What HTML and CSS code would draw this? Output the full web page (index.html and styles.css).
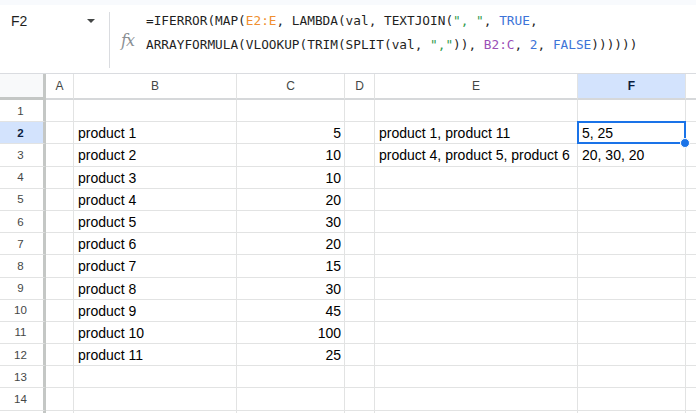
FILE: index.html
```html
<!DOCTYPE html>
<html>
<head>
<meta charset="utf-8">
<link rel="stylesheet" href="styles.css">
</head>
<body>
<div class="topstrip"></div>
<div class="formula-bar">
  <div class="namebox"><span class="name">F2</span><span class="caret"></span></div>
  <div class="sep"></div>
  <div class="fx">fx</div>
  <div class="formula">=IFERROR(MAP(<span class="c-or">E2:E</span>, LAMBDA(val, TEXTJOIN(<span class="c-gr">", "</span>, <span class="c-bl">TRUE</span>,<br>ARRAYFORMULA(VLOOKUP(TRIM(SPLIT(val, <span class="c-gr">","</span>)), <span class="c-pu">B2:C</span>, <span class="c-bl">2</span>, <span class="c-bl">FALSE</span>))))))</div>
</div>
<div class="grid">
  <div class="corner"></div><div class="ch">A</div><div class="ch">B</div><div class="ch">C</div><div class="ch">D</div><div class="ch">E</div><div class="ch sel">F</div><div class="ch last"></div>

  <div class="rh">1</div><div class="c"></div><div class="c"></div><div class="c"></div><div class="c"></div><div class="c"></div><div class="c"></div><div class="c last"></div>
  <div class="rh sel">2</div><div class="c"></div><div class="c">product 1</div><div class="c num">5</div><div class="c"></div><div class="c">product 1, product 11</div><div class="c active">5, 25<span class="handle"></span></div><div class="c last"></div>
  <div class="rh">3</div><div class="c"></div><div class="c">product 2</div><div class="c num">10</div><div class="c"></div><div class="c">product 4, product 5, product 6</div><div class="c">20, 30, 20</div><div class="c last"></div>
  <div class="rh">4</div><div class="c"></div><div class="c">product 3</div><div class="c num">10</div><div class="c"></div><div class="c"></div><div class="c"></div><div class="c last"></div>
  <div class="rh">5</div><div class="c"></div><div class="c">product 4</div><div class="c num">20</div><div class="c"></div><div class="c"></div><div class="c"></div><div class="c last"></div>
  <div class="rh">6</div><div class="c"></div><div class="c">product 5</div><div class="c num">30</div><div class="c"></div><div class="c"></div><div class="c"></div><div class="c last"></div>
  <div class="rh">7</div><div class="c"></div><div class="c">product 6</div><div class="c num">20</div><div class="c"></div><div class="c"></div><div class="c"></div><div class="c last"></div>
  <div class="rh">8</div><div class="c"></div><div class="c">product 7</div><div class="c num">15</div><div class="c"></div><div class="c"></div><div class="c"></div><div class="c last"></div>
  <div class="rh">9</div><div class="c"></div><div class="c">product 8</div><div class="c num">30</div><div class="c"></div><div class="c"></div><div class="c"></div><div class="c last"></div>
  <div class="rh">10</div><div class="c"></div><div class="c">product 9</div><div class="c num">45</div><div class="c"></div><div class="c"></div><div class="c"></div><div class="c last"></div>
  <div class="rh">11</div><div class="c"></div><div class="c">product 10</div><div class="c num">100</div><div class="c"></div><div class="c"></div><div class="c"></div><div class="c last"></div>
  <div class="rh">12</div><div class="c"></div><div class="c">product 11</div><div class="c num">25</div><div class="c"></div><div class="c"></div><div class="c"></div><div class="c last"></div>
  <div class="rh">13</div><div class="c"></div><div class="c"></div><div class="c"></div><div class="c"></div><div class="c"></div><div class="c"></div><div class="c last"></div>
  <div class="rh">14</div><div class="c"></div><div class="c"></div><div class="c"></div><div class="c"></div><div class="c"></div><div class="c"></div><div class="c last"></div>
  <div class="rh"></div><div class="c"></div><div class="c"></div><div class="c"></div><div class="c"></div><div class="c"></div><div class="c"></div><div class="c last"></div>
</div>
</body>
</html>
```

FILE: styles.css
```css
html, body {
  margin: 0;
  padding: 0;
  background: #ffffff;
  overflow: hidden;
}
body {
  font-family: "Liberation Sans", Arial, sans-serif;
  color: #000;
  width: 696px;
  height: 413px;
}
.topstrip {
  height: 5px;
  background: #f8fafd;
}
.formula-bar {
  height: 68px;
  display: flex;
  align-items: flex-start;
  background: #fff;
}
.namebox {
  width: 98px;
  padding-left: 11px;
  margin-top: 6px;
  display: flex;
  align-items: center;
  height: 20px;
  box-sizing: content-box;
}
.name {
  font-size: 14px;
  line-height: 20px;
  color: #1f1f1f;
  flex: 1;
}
.caret {
  width: 0;
  height: 0;
  border-left: 4px solid transparent;
  border-right: 4px solid transparent;
  border-top: 4px solid #444746;
  margin-right: 14px;
  margin-top: -1px;
}
.sep {
  width: 1px;
  height: 56px;
  margin-top: 7px;
  background: #dadce0;
}
.fx {
  width: 25px;
  margin-left: 11px;
  margin-top: 26px;
  font-family: "DejaVu Serif", "Liberation Serif", serif;
  font-style: italic;
  font-size: 16px;
  line-height: 20px;
  color: #8a8f94;
  letter-spacing: -1px;
}
.formula {
  margin-left: 0;
  padding-top: 4px;
  font-family: "DejaVu Sans Mono", "Liberation Mono", monospace;
  font-size: 12.75px;
  line-height: 24px;
  color: #1f1f1f;
  white-space: nowrap;
}
.c-or { color: #f0902f; }
.c-gr { color: #2f9a4c; }
.c-bl { color: #3d74d8; }
.c-pu { color: #9a4fb7; }

.grid {
  display: grid;
  grid-template-columns: 46px 28px 163px 108px 30px 203px 108px 10px;
  grid-template-rows: 26px repeat(15, 22.2px);
  border-top: 1px solid #dadce0;
}
.grid > div {
  box-sizing: border-box;
  border-right: 1px solid #e2e3e3;
  border-bottom: 1px solid #e2e3e3;
}
.corner {
  background: #f8f9fa;
  border-right: 3px solid #c4c7c5 !important;
  border-bottom: 3px solid #c4c7c5 !important;
}
.ch {
  font-size: 12px;
  color: #444746;
  display: flex;
  align-items: center;
  justify-content: center;
  border-bottom: 2px solid #d6d8da !important;
}
.ch.sel {
  background: #d3e3fd;
  color: #0b1e3f;
  font-weight: bold;
}
.rh {
  font-size: 11.5px;
  color: #444746;
  display: flex;
  align-items: center;
  justify-content: center;
  border-right: 3px solid #c4c7c5 !important;
  padding-right: 2px;
}
.rh.sel {
  background: #d3e3fd;
  color: #0b1e3f;
  font-weight: bold;
}
.c {
  font-size: 14px;
  line-height: 20px;
  padding: 1px 4px 0 4px;
  white-space: nowrap;
  display: flex;
  align-items: center;
}
.c.num {
  justify-content: flex-end;
  padding-right: 3px;
}
.active {
  position: relative;
}
.active::after {
  content: "";
  position: absolute;
  left: -1px;
  top: -1px;
  right: -1px;
  bottom: -1px;
  border: 2px solid #1a73e8;
}
.handle {
  position: absolute;
  right: -5px;
  bottom: -5px;
  width: 8px;
  height: 8px;
  border-radius: 50%;
  background: #1a73e8;
  border: 1px solid #fff;
  z-index: 2;
}
.grid > .last {
  border-right: none;
}
```
